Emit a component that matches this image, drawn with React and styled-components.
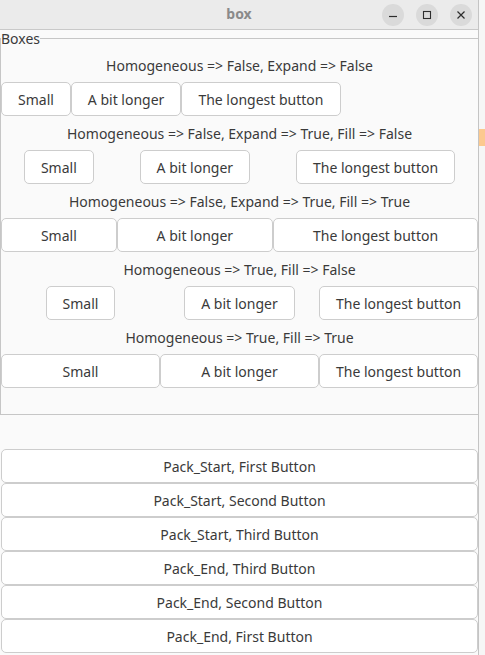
import React from 'react';
import styled, { createGlobalStyle, css } from 'styled-components';

const Global = createGlobalStyle`
  html, body { margin: 0; padding: 0; background: #f6f6f6; }
  body { font-family: "Noto Sans", "DejaVu Sans", sans-serif; }
  * { box-sizing: border-box; }
`;

const Desktop = styled.div`
  display: flex;
  width: 485px;
  height: 655px;
  overflow: hidden;
  background: #f6f6f6;
`;

const Window = styled.div`
  width: 479px;
  flex: none;
  display: flex;
  flex-direction: column;
  background: #fafafa;
  border-right: 1px solid #c4c4c4;
`;

const Side = styled.div`
  flex: 1;
  padding-top: 129px;
`;

const Marker = styled.div`
  height: 17px;
  background: #fcc98f;
`;

const TitleBar = styled.header`
  height: 30px;
  flex: none;
  display: grid;
  grid-template-columns: 1fr auto 1fr;
  align-items: center;
  padding: 0 6px;
  background: #ebebeb;
  border-bottom: 1px solid #c9c9c9;
`;

const Title = styled.div`
  grid-column: 2;
  font-size: 14px;
  font-weight: 700;
  color: #8a8a8a;
  line-height: 17px;
  margin-top: -3px;
`;

const Controls = styled.div`
  grid-column: 3;
  justify-self: end;
  display: flex;
  gap: 12px;
`;

const Circle = styled.div`
  width: 22px;
  height: 22px;
  border-radius: 50%;
  background: #dadada;
  display: flex;
  align-items: center;
  justify-content: center;
  color: #2d2d2d;
`;

const Frame = styled.fieldset`
  margin: 0;
  padding: 1px 0 26px 0;
  min-width: 0;
  border: 1px solid #c6c6c6;
  border-right: none;
`;

const Legend = styled.legend`
  padding: 0;
  font-size: 14px;
  line-height: 17px;
  color: #3a3a3a;
`;

const Caption = styled.div`
  height: 34px;
  display: flex;
  align-items: center;
  justify-content: center;
  font-size: 14px;
  color: #3a3a3a;
  white-space: nowrap;
`;

const Row = styled.div`
  height: 34px;
  ${({ $mode }) =>
    $mode === 'homog' || $mode === 'homogFill'
      ? css`
          display: grid;
          grid-template-columns: repeat(3, 1fr);
        `
      : css`
          display: flex;
        `}
`;

const Slot = styled.div`
  display: flex;
  justify-content: center;
  min-width: 0;
  ${({ $mode }) =>
    $mode === 'natural'
      ? css`flex: none;`
      : $mode === 'expand' || $mode === 'fill'
      ? css`flex: 1 1 auto;`
      : ''}
`;

const Button = styled.button`
  height: 34px;
  padding: 0 16px;
  border: 1px solid #cdcdcd;
  border-radius: 5px;
  background: #ffffff;
  font-family: inherit;
  font-size: 14px;
  color: #3a3a3a;
  white-space: nowrap;
  ${({ $stretch }) => $stretch && css`width: 100%;`}
`;

const PackList = styled.div`
  margin-top: 34px;
  padding-left: 1px;
  display: flex;
  flex-direction: column;
`;

const labels = ['Small', 'A bit longer', 'The longest button'];

const sections = [
  { caption: 'Homogeneous => False, Expand => False', mode: 'natural' },
  { caption: 'Homogeneous => False, Expand => True, Fill => False', mode: 'expand' },
  { caption: 'Homogeneous => False, Expand => True, Fill => True', mode: 'fill' },
  { caption: 'Homogeneous => True, Fill => False', mode: 'homog' },
  { caption: 'Homogeneous => True, Fill => True', mode: 'homogFill' },
];

const packs = [
  'Pack_Start, First Button',
  'Pack_Start, Second Button',
  'Pack_Start, Third Button',
  'Pack_End, Third Button',
  'Pack_End, Second Button',
  'Pack_End, First Button',
];

const MinIcon = () => (
  <svg width="10" height="10" viewBox="0 0 10 10">
    <path d="M1 6.5h8" stroke="currentColor" strokeWidth="1.2" />
  </svg>
);
const MaxIcon = () => (
  <svg width="10" height="10" viewBox="0 0 10 10">
    <rect x="1.5" y="1.5" width="7" height="7" fill="none" stroke="currentColor" strokeWidth="1.1" />
  </svg>
);
const CloseIcon = () => (
  <svg width="10" height="10" viewBox="0 0 10 10">
    <path d="M1.5 1.5l7 7M8.5 1.5l-7 7" stroke="currentColor" strokeWidth="1.2" />
  </svg>
);

export default function App() {
  return (
    <>
      <Global />
      <Desktop>
        <Window>
          <TitleBar>
            <Title>box</Title>
            <Controls>
              <Circle><MinIcon /></Circle>
              <Circle><MaxIcon /></Circle>
              <Circle><CloseIcon /></Circle>
            </Controls>
          </TitleBar>
          <Frame>
            <Legend>Boxes</Legend>
            {sections.map((s) => (
              <React.Fragment key={s.mode}>
                <Caption>{s.caption}</Caption>
                <Row $mode={s.mode}>
                  {labels.map((l) => (
                    <Slot key={l} $mode={s.mode}>
                      <Button $stretch={s.mode === 'fill' || s.mode === 'homogFill'}>{l}</Button>
                    </Slot>
                  ))}
                </Row>
              </React.Fragment>
            ))}
          </Frame>
          <PackList>
            {packs.map((p) => (
              <Button key={p} $stretch>{p}</Button>
            ))}
          </PackList>
        </Window>
        <Side>
          <Marker />
        </Side>
      </Desktop>
    </>
  );
}
